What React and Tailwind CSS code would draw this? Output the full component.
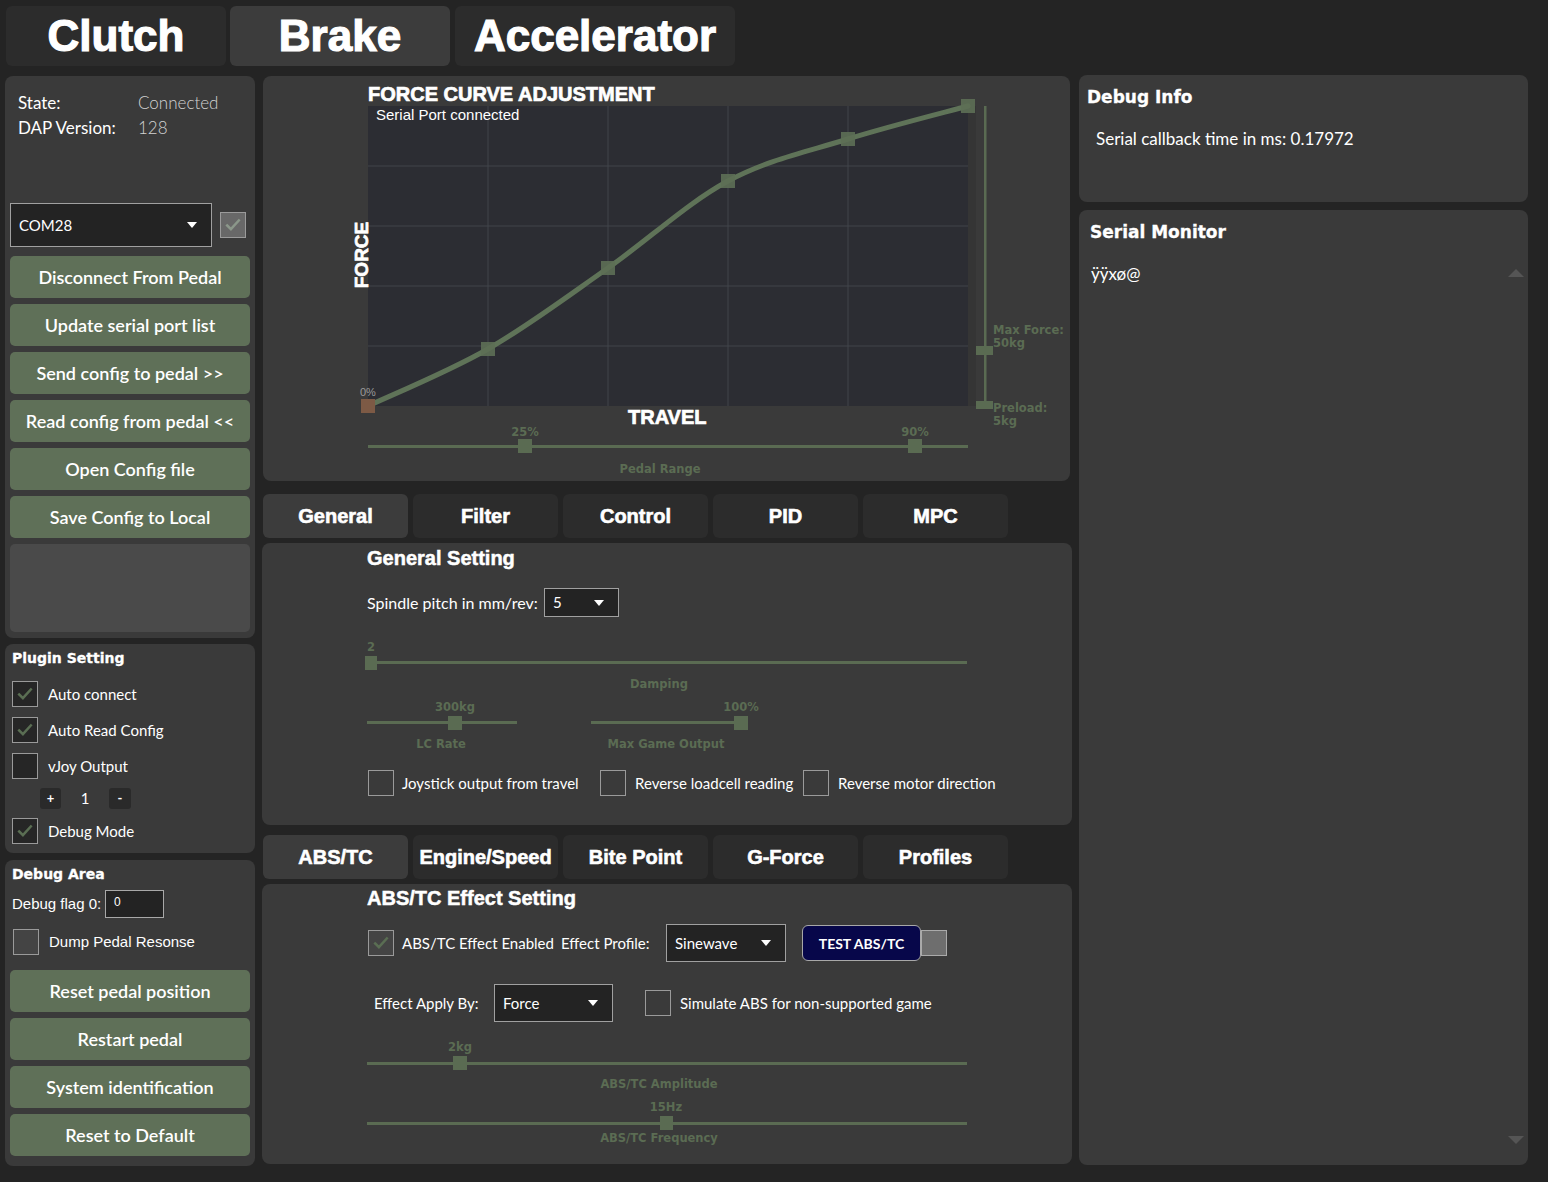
import React from 'react'

const UI = "font-['Lato',sans-serif]"
const ARIAL = "font-['Liberation_Sans',Arial,sans-serif]"
const DV = "font-['DejaVu_Sans',sans-serif]"

// small green slider label
const lbl = `absolute -translate-x-1/2 text-[11.5px] leading-[13px] font-bold text-[#5b6c53] whitespace-nowrap ${DV}`

const CheckMark = ({ className }) => (
  <svg viewBox="0 0 24 24" className={className} fill="none" stroke="currentColor" strokeWidth="3" strokeLinecap="square">
    <path d="M5 12.5l4.5 4.5L19 6.5" />
  </svg>
)

const CheckBox = ({ checked, className = 'bg-[#262626]' }) => (
  <div className={`w-[26px] h-[26px] shrink-0 border border-[#9a9a9a] flex items-center justify-center ${className}`}>
    {checked && <CheckMark className="w-[20px] h-[20px] text-[#5a6e53]" />}
  </div>
)

const Arrow = () => (
  <span className="w-0 h-0 border-x-[5px] border-x-transparent border-t-[6px] border-t-white" />
)

const Combo = ({ value, className, text = 'text-[15px]' }) => (
  <div className={`bg-[#232323] border border-[#a0a0a0] flex items-center justify-between text-white ${text} ${UI} ${className}`}>
    <span>{value}</span>
    <Arrow />
  </div>
)

const GreenButton = ({ children }) => (
  <button className={`w-[240px] h-[42px] shrink-0 rounded-[5px] bg-[#5f7058] text-white text-[18px] font-semibold ${UI}`}>
    {children}
  </button>
)

const Tab = ({ children, active, className = 'w-[145px] h-[44px] text-[20px] [-webkit-text-stroke:0.6px_white]' }) => (
  <div className={`${className} rounded-md flex items-center justify-center font-bold text-white ${ARIAL} ${active ? 'bg-[#3c3c3c]' : 'bg-[#2c2c2c]'}`}>
    {children}
  </div>
)

function ForceChart() {
  const pts = [[225, 273], [345, 192], [465, 105], [585, 63], [705, 30]]
  const curve = 'M105 330 C125 320.5 185 296 225 273 C265 250 305 220 345 192 C385 164 425 126.5 465 105 C505 83.5 545 75.5 585 63 C625 50.5 685 35.5 705 30'
  const txt = { fontFamily: 'DejaVu Sans', fontWeight: 'bold', fontSize: 11.5, fill: '#5b6c53' }
  const heavy = { fill: '#fff', stroke: '#fff', strokeWidth: 0.7, fontFamily: 'Liberation Sans', fontWeight: 'bold', fontSize: 20 }
  return (
    <div className="relative ml-px w-[807px] h-[405px] bg-[#3a3a3a] rounded-lg overflow-hidden">
      <svg className="absolute inset-0" width="807" height="405" viewBox="0 0 807 405">
        <rect x="705" y="30" width="8" height="300" fill="#353535" />
        <rect x="105" y="30" width="600" height="300" fill="#2c2d33" />
        {[225, 345, 465, 585].map(x => (
          <line key={x} x1={x} y1="30" x2={x} y2="330" stroke="#41444b" strokeWidth="1" />
        ))}
        {[90, 150, 210, 270].map(y => (
          <line key={y} x1="105" y1={y} x2="705" y2={y} stroke="#41444b" strokeWidth="1" />
        ))}
        <path d={curve} fill="none" stroke="#5f7358" strokeWidth="5" strokeLinecap="round" />
        {pts.map(([x, y]) => (
          <rect key={x} x={x - 7} y={y - 7} width="14" height="14" fill="#5d6f55" opacity="0.9" />
        ))}
        <rect x="98" y="323" width="14" height="14" fill="#7d5a45" />

        <text x="105" y="25" {...heavy}>FORCE CURVE ADJUSTMENT</text>
        <text x="113" y="43.5" fill="#fff" fontFamily="Liberation Sans" fontSize="15">Serial Port connected</text>
        <text transform="translate(105 179) rotate(-90)" textAnchor="middle" {...heavy} fontSize="19">FORCE</text>
        <text x="97" y="320" fill="#9a9a9a" fontFamily="Liberation Sans" fontSize="11">0%</text>
        <text x="365" y="348" {...heavy}>TRAVEL</text>

        {/* max force / preload slider */}
        <rect x="721" y="30" width="2.5" height="299" fill="#5a6b52" />
        <rect x="713" y="270" width="17" height="9" fill="#5a6b52" />
        <rect x="713" y="325" width="17" height="8" fill="#5a6b52" />
        <text x="730" y="258" {...txt}>Max Force:</text>
        <text x="730" y="271" {...txt}>50kg</text>
        <text x="730" y="336" {...txt}>Preload:</text>
        <text x="730" y="349" {...txt}>5kg</text>

        {/* pedal range */}
        <rect x="105" y="369" width="600" height="3" fill="#5a6b52" />
        <rect x="255" y="363" width="14" height="14" fill="#5a6b52" />
        <rect x="645" y="363" width="14" height="14" fill="#5a6b52" />
        <text x="262" y="360" textAnchor="middle" {...txt}>25%</text>
        <text x="652" y="360" textAnchor="middle" {...txt}>90%</text>
        <text x="397" y="397" textAnchor="middle" {...txt}>Pedal Range</text>
      </svg>
    </div>
  )
}

function GeneralPanel() {
  return (
    <div className={`w-[810px] h-[282px] bg-[#3a3a3a] rounded-lg pl-[105px] pt-[3px] text-white ${UI}`}>
      <div className={`text-[20px] leading-[24px] font-bold [-webkit-text-stroke:0.5px_white] ${ARIAL}`}>General Setting</div>
      <div className="mt-[18px] flex items-center h-[29px] text-[16px]">
        <span className="w-[177px]">Spindle pitch in mm/rev:</span>
        <Combo value="5" className="w-[75px] h-[29px] pl-[8px] pr-[14px]" />
      </div>

      {/* damping */}
      <div className="relative mt-[23px] w-[600px] h-[52px]">
        <span className={`${lbl} left-[4px] top-[1px]`}>2</span>
        <div className="absolute left-0 right-0 top-[21px] h-[3px] bg-[#5a6b52]" />
        <div className="absolute left-[-2px] top-[16px] w-[12px] h-[14px] bg-[#5a6b52]" />
        <span className={`${lbl} left-[292px] top-[38px]`}>Damping</span>
      </div>

      <div className="mt-[8px] flex h-[52px]">
        <div className="relative w-[150px] h-[52px]">
          <span className={`${lbl} left-[88px] top-[1px]`}>300kg</span>
          <div className="absolute left-0 right-0 top-[21px] h-[3px] bg-[#5a6b52]" />
          <div className="absolute left-[81px] top-[16px] w-[14px] h-[14px] bg-[#5a6b52]" />
          <span className={`${lbl} left-[74px] top-[38px]`}>LC Rate</span>
        </div>
        <div className="relative ml-[74px] w-[157px] h-[52px]">
          <span className={`${lbl} left-[150px] top-[1px]`}>100%</span>
          <div className="absolute left-0 right-0 top-[21px] h-[3px] bg-[#5a6b52]" />
          <div className="absolute left-[143px] top-[16px] w-[14px] h-[14px] bg-[#5a6b52]" />
          <span className={`${lbl} left-[75px] top-[38px]`}>Max Game Output</span>
        </div>
      </div>

      <div className="mt-[18px] flex items-center h-[26px] text-[15px]">
        <div className="w-[233px] flex items-center pl-px">
          <CheckBox className="bg-[#3a3a3a]" />
          <span className="ml-[8px]">Joystick output from travel</span>
        </div>
        <div className="w-[203px] flex items-center">
          <CheckBox className="bg-[#3a3a3a]" />
          <span className="ml-[9px]">Reverse loadcell reading</span>
        </div>
        <div className="flex items-center">
          <CheckBox className="bg-[#3a3a3a]" />
          <span className="ml-[9px]">Reverse motor direction</span>
        </div>
      </div>
    </div>
  )
}

function AbsPanel() {
  return (
    <div className={`w-[810px] h-[280px] bg-[#3a3a3a] rounded-lg pl-[105px] pt-[2px] text-white ${UI}`}>
      <div className={`text-[20px] leading-[24px] font-bold [-webkit-text-stroke:0.5px_white] ${ARIAL}`}>ABS/TC Effect Setting</div>
      <div className="mt-[14px] flex items-center h-[38px] text-[15px]">
        <div className="pl-px">
          <CheckBox checked className="bg-[#444]" />
        </div>
        <span className="ml-[8px] w-[159px]">ABS/TC Effect Enabled</span>
        <span className="w-[105px]">Effect Profile:</span>
        <Combo value="Sinewave" className="w-[120px] h-[38px] pl-[8px] pr-[14px]" />
        <button className={`ml-[16px] w-[119px] h-[36px] rounded-[6px] bg-[#07074a] border border-[#a8a8a8] text-white text-[14px] font-bold ${UI}`}>
          TEST ABS/TC
        </button>
        <div className="w-[26px] h-[26px] bg-[#6e6e6e] border border-[#aaa]" />
      </div>
      <div className="mt-[22px] flex items-center h-[38px] text-[15px]">
        <span className="ml-[7px] w-[120px]">Effect Apply By:</span>
        <Combo value="Force" className="w-[119px] h-[38px] pl-[8px] pr-[14px]" />
        <div className="ml-[32px]">
          <CheckBox className="bg-[#3a3a3a]" />
        </div>
        <span className="ml-[9px]">Simulate ABS for non-supported game</span>
      </div>

      <div className="relative mt-[19px] w-[600px] h-[50px]">
        <span className={`${lbl} left-[93px] top-0`}>2kg</span>
        <div className="absolute left-0 right-0 top-[21px] h-[3px] bg-[#5a6b52]" />
        <div className="absolute left-[86px] top-[15px] w-[14px] h-[14px] bg-[#5a6b52]" />
        <span className={`${lbl} left-[292px] top-[37px]`}>ABS/TC Amplitude</span>
      </div>
      <div className="relative mt-[10px] w-[600px] h-[46px]">
        <span className={`${lbl} left-[299px] top-0`}>15Hz</span>
        <div className="absolute left-0 right-0 top-[21px] h-[3px] bg-[#5a6b52]" />
        <div className="absolute left-[293px] top-[15px] w-[13px] h-[14px] bg-[#5a6b52]" />
        <span className={`${lbl} left-[292px] top-[31px]`}>ABS/TC Frequency</span>
      </div>
    </div>
  )
}

export default function App() {
  const big = 'h-[60px] text-[44px] [-webkit-text-stroke:1.2px_white]'
  return (
    <div className="w-[1548px] h-[1182px] bg-[#242424] overflow-hidden">
      {/* pedal selector */}
      <div className="flex pt-[6px] pl-[6px]">
        <Tab className={`w-[220px] ${big}`}>Clutch</Tab>
        <div className="ml-[4px]">
          <Tab active className={`w-[220px] ${big}`}>Brake</Tab>
        </div>
        <div className="ml-[5px]">
          <Tab className={`w-[280px] ${big}`}>Accelerator</Tab>
        </div>
      </div>

      <div className="flex pl-[5px] mt-[10px]">
        {/* left column */}
        <div className="w-[250px] flex flex-col">
          <div className="h-[562px] bg-[#3a3a3a] rounded-lg px-[5px] pt-[14px] flex flex-col">
            <div className={`grid grid-cols-[120px_1fr] pl-[8px] text-[17px] leading-[25px] text-white ${UI}`}>
              <span>State:</span>
              <span className="text-[#d2d2d2] font-light">Connected</span>
              <span>DAP Version:</span>
              <span className="text-[#d2d2d2] font-light">128</span>
            </div>
            <div className="mt-[63px] flex items-center">
              <Combo value="COM28" className="w-[202px] h-[44px] pl-[8px] pr-[14px]" />
              <div className="ml-[8px] w-[26px] h-[26px] bg-[#686868] border border-[#9a9a9a] flex items-center justify-center">
                <CheckMark className="w-[20px] h-[20px] text-[#8b978a]" />
              </div>
            </div>
            <div className="mt-[9px] flex flex-col gap-[6px]">
              <GreenButton>Disconnect From Pedal</GreenButton>
              <GreenButton>Update serial port list</GreenButton>
              <GreenButton>Send config to pedal &gt;&gt;</GreenButton>
              <GreenButton>Read config from pedal &lt;&lt;</GreenButton>
              <GreenButton>Open Config file</GreenButton>
              <GreenButton>Save Config to Local</GreenButton>
              <div className="w-[240px] h-[88px] rounded-[5px] bg-[#4a4a4a]" />
            </div>
          </div>

          <div className={`mt-[6px] h-[209px] bg-[#3a3a3a] rounded-lg px-[7px] pt-[5px] text-white ${UI}`}>
            <div className={`text-[14px] leading-[18px] font-bold [-webkit-text-stroke:0.3px_white] ${DV}`}>Plugin Setting</div>
            <div className="mt-[14px] flex flex-col gap-[10px] text-[15px]">
              <div className="flex items-center"><CheckBox checked /><span className="ml-[10px]">Auto connect</span></div>
              <div className="flex items-center"><CheckBox checked /><span className="ml-[10px]">Auto Read Config</span></div>
              <div className="flex items-center"><CheckBox /><span className="ml-[10px]">vJoy Output</span></div>
            </div>
            <div className="mt-[9px] flex items-center h-[21px] text-[15px] font-bold">
              <span className="ml-[28px] w-[21px] h-[21px] rounded-[3px] bg-[#2a2a2a] flex items-center justify-center text-[13px]">+</span>
              <span className="w-[48px] text-center font-normal">1</span>
              <span className="w-[22px] h-[21px] rounded-[3px] bg-[#2a2a2a] flex items-center justify-center text-[13px]">-</span>
            </div>
            <div className="mt-[9px] flex items-center text-[15px]"><CheckBox checked /><span className="ml-[10px]">Debug Mode</span></div>
          </div>

          <div className="mt-[7px] h-[306px] bg-[#3a3a3a] rounded-lg px-[5px] pt-[5px] text-white">
            <div className={`pl-[2px] text-[14px] leading-[18px] font-bold [-webkit-text-stroke:0.3px_white] ${DV}`}>Debug Area</div>
            <div className={`mt-[7px] pl-[2px] flex items-center h-[28px] text-[15px] ${ARIAL}`}>
              <span className="w-[93px]">Debug flag 0:</span>
              <div className="w-[59px] h-[28px] bg-[#232323] border border-[#a8a8a8] pl-[8px] text-[12px] leading-[22px]">0</div>
            </div>
            <div className={`mt-[11px] pl-[3px] flex items-center text-[15px] ${ARIAL}`}>
              <CheckBox className="bg-[#444]" />
              <span className="ml-[10px]">Dump Pedal Resonse</span>
            </div>
            <div className="mt-[15px] flex flex-col gap-[6px]">
              <GreenButton>Reset pedal position</GreenButton>
              <GreenButton>Restart pedal</GreenButton>
              <GreenButton>System identification</GreenButton>
              <GreenButton>Reset to Default</GreenButton>
            </div>
          </div>
        </div>

        {/* middle column */}
        <div className="ml-[7px] w-[810px] flex flex-col">
          <ForceChart />
          <div className="mt-[13px] ml-px flex gap-[5px]">
            <Tab active>General</Tab>
            <Tab>Filter</Tab>
            <Tab>Control</Tab>
            <Tab>PID</Tab>
            <Tab>MPC</Tab>
          </div>
          <div className="mt-[5px]"><GeneralPanel /></div>
          <div className="mt-[10px] ml-px flex gap-[5px]">
            <Tab active>ABS/TC</Tab>
            <Tab>Engine/Speed</Tab>
            <Tab>Bite Point</Tab>
            <Tab>G-Force</Tab>
            <Tab>Profiles</Tab>
          </div>
          <div className="mt-[5px]"><AbsPanel /></div>
        </div>

        {/* right column */}
        <div className="ml-[7px] -mt-px w-[449px] flex flex-col text-white">
          <div className="h-[127px] bg-[#3a3a3a] rounded-lg pl-[8px] pt-[11px]">
            <div className={`text-[17px] leading-[22px] font-bold [-webkit-text-stroke:0.3px_white] ${DV}`}>Debug Info</div>
            <div className={`mt-[19px] ml-[9px] text-[17px] leading-[24px] ${UI}`}>Serial callback time in ms: 0.17972</div>
          </div>
          <div className="relative mt-[8px] h-[955px] bg-[#3a3a3a] rounded-lg pl-[11px] pt-[11px]">
            <div className={`text-[17px] leading-[22px] font-bold [-webkit-text-stroke:0.3px_white] ${DV}`}>Serial Monitor</div>
            <div className={`mt-[19px] ml-px text-[17px] leading-[24px] ${UI}`}>ÿÿxø@</div>
            <span className="absolute left-[429px] top-[59px] w-0 h-0 border-x-[8px] border-x-transparent border-b-[8px] border-b-[#555]" />
            <span className="absolute left-[429px] top-[926px] w-0 h-0 border-x-[8px] border-x-transparent border-t-[8px] border-t-[#555]" />
          </div>
        </div>
      </div>
    </div>
  )
}
